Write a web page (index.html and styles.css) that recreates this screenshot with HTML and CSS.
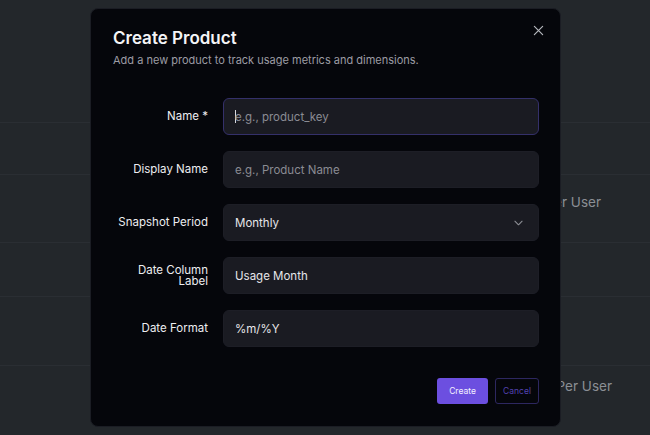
FILE: index.html
```html
<!DOCTYPE html>
<html lang="en">
<head>
<meta charset="utf-8">
<title>Products</title>
<link rel="stylesheet" href="styles.css">
</head>
<body>
  <main class="table">
    <div class="row row-head"></div>
    <div class="row row-a"></div>
    <div class="row row-b"><span class="cell cell-b">Avg Sessions Per User</span></div>
    <div class="row row-c"></div>
    <div class="row row-d"></div>
    <div class="row row-e"><span class="cell cell-e">Revenue Per User</span></div>
  </main>

  <div class="dialog" role="dialog" aria-labelledby="dlg-title">
    <button class="close" type="button" aria-label="Close">
      <svg viewBox="0 0 12 12" width="11" height="11"><path d="M1.5 1.5l9 9M10.5 1.5l-9 9" stroke="currentColor" stroke-width="1.3" stroke-linecap="round" fill="none"/></svg>
    </button>
    <header class="dialog-head">
      <h2 id="dlg-title" class="title">Create Product</h2>
      <p class="subtitle">Add a new product to track usage metrics and dimensions.</p>
    </header>

    <form class="form">
      <label class="label" for="f-name">Name *</label>
      <div class="field field-focus"><span class="caret"></span><span class="placeholder">e.g., product_key</span></div>

      <label class="label" for="f-display">Display Name</label>
      <div class="field"><span class="placeholder">e.g., Product Name</span></div>

      <label class="label">Snapshot Period</label>
      <div class="field field-select"><span class="value">Monthly</span>
        <svg class="chev" viewBox="0 0 10 6" width="9" height="6"><path d="M1 1l4 4 4-4" stroke="currentColor" stroke-width="1.2" fill="none" stroke-linecap="round" stroke-linejoin="round"/></svg>
      </div>

      <label class="label label-wrap">Date Column Label</label>
      <div class="field"><span class="value">Usage Month</span></div>

      <label class="label">Date Format</label>
      <div class="field"><span class="value">%m/%Y</span></div>
    </form>

    <footer class="actions">
      <button class="btn btn-primary" type="button">Create</button>
      <button class="btn btn-outline" type="button">Cancel</button>
    </footer>
  </div>
</body>
</html>
```
FILE: styles.css
```css
html, body {
  margin: 0;
  height: 100%;
}
body {
  background: #23272b;
  font-family: Inter, "Noto Sans", sans-serif;
  overflow: hidden;
}

/* page behind the dialog */
.table {
  display: flex;
  flex-direction: column;
}
.row {
  border-bottom: 1px solid #2a2e33;
  display: flex;
  align-items: center;
}
.row-head { height: 122px; }
.row-a { height: 51px; }
.row-b { height: 67px; align-items: flex-start; }
.row-c { height: 53px; }
.row-d { height: 68px; }
.row-e { height: 69px; border-bottom: 0; align-items: flex-start; }
.cell {
  color: #8b8f95;
  font-size: 13.5px;
  white-space: nowrap;
  text-align: right;
  margin-left: 380px;
}
.cell-b { margin-top: 19px; width: 221px; }
.cell-e { margin-top: 12px; width: 232px; }

/* dialog */
.dialog {
  position: absolute;
  left: 90px;
  top: 8px;
  width: 471px;
  height: 419px;
  box-sizing: border-box;
  background: #05060b;
  border: 1px solid #1b1d24;
  border-radius: 8px;
  padding: 18px 21px 22px 22px;
  display: flex;
  flex-direction: column;
}
.close {
  position: absolute;
  top: 16px;
  right: 16px;
  padding: 0;
  border: 0;
  background: none;
  color: #b5b7bd;
  width: 11px;
  height: 11px;
  display: flex;
}
.dialog-head { margin-bottom: 30px; }
.title {
  margin: 0;
  color: #f4f4f6;
  font-size: 17px;
  line-height: 22px;
  font-weight: 600;
}
.subtitle {
  margin: 3px 0 0;
  color: #9c9ca4;
  font-size: 11px;
  line-height: 16px;
}

.form {
  display: grid;
  grid-template-columns: 95px 316px;
  column-gap: 15px;
  row-gap: 16px;
  align-items: center;
}
.label {
  color: #ededf0;
  font-size: 11.5px;
  line-height: 11px;
  font-weight: 400;
  text-align: right;
}
.label-wrap { padding-left: 20px; }
.field {
  height: 37px;
  box-sizing: border-box;
  background: #1a1b22;
  border: 1px solid #1d1e26;
  border-radius: 6px;
  padding: 0 12px 0 11px;
  display: flex;
  align-items: center;
  font-size: 11.5px;
}
.field-focus { border-color: #34306a; }
.caret {
  width: 1px;
  height: 13px;
  background: #d8d8de;
  margin-right: -1px;
}
.placeholder { color: #8a8b93; }
.value { color: #e6e6ea; }
.field-select { justify-content: space-between; padding-right: 15px; }
.chev { color: #8d8f96; }

.actions {
  margin-top: auto;
  display: flex;
  justify-content: flex-end;
  gap: 7px;
}
.btn {
  height: 26px;
  border-radius: 3px;
  font-family: Inter, sans-serif;
  font-size: 8.5px;
  line-height: 10px;
  white-space: nowrap;
  padding: 0;
}
.btn-primary {
  width: 51px;
  background: #6c4fe0;
  color: #f4f1ff;
  border: 0;
}
.btn-outline {
  width: 44px;
  background: transparent;
  border: 1px solid #2d2760;
  color: #5343b0;
}
```
